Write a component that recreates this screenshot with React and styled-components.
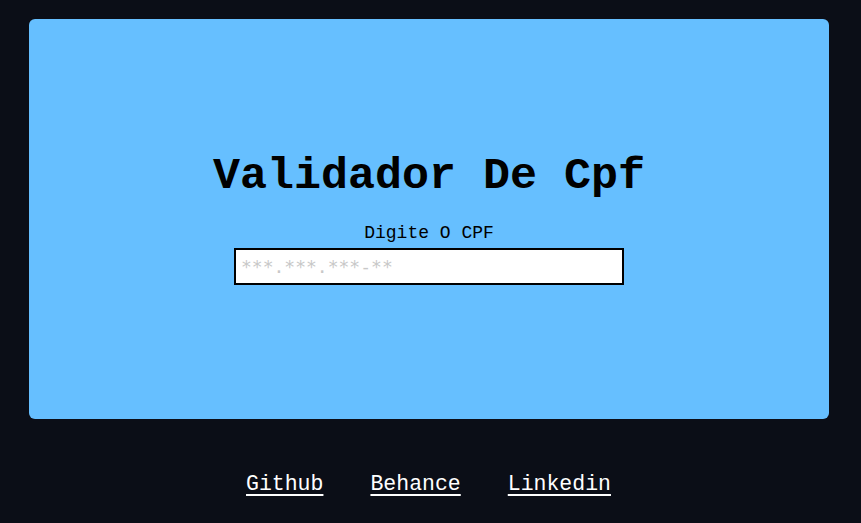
import React from "react";
import styled, { createGlobalStyle } from "styled-components";

const colors = {
  bg: "#0b0e17",
  card: "#66bfff",
  ink: "#000000",
  white: "#ffffff",
  hint: "#c8c8c8",
};

const GlobalStyle = createGlobalStyle`
  html, body {
    margin: 0;
    padding: 0;
    background: ${colors.bg};
    font-family: "Liberation Mono", "DejaVu Sans Mono", monospace;
  }
`;

const Page = styled.div`
  box-sizing: border-box;
  width: 861px;
  height: 523px;
  padding: 19px 32px 0 29px;
  display: flex;
  flex-direction: column;
`;

const Card = styled.main`
  width: 800px;
  height: 400px;
  background-color: ${colors.card};
  border-radius: 6px;
  display: flex;
  flex-direction: column;
  align-items: center;
  justify-content: center;
`;

const Title = styled.h1`
  margin: 0;
  font-size: 45px;
  font-weight: 700;
  line-height: 46px;
  color: ${colors.ink};
`;

const Label = styled.label`
  margin-top: 22px;
  font-size: 18px;
  line-height: 22px;
  color: ${colors.ink};
`;

const Input = styled.input`
  box-sizing: border-box;
  margin-top: 4px;
  width: 390px;
  height: 37px;
  border: 2px solid ${colors.ink};
  background: ${colors.white};
  padding: 0 5px;
  font-family: "DejaVu Sans Mono", monospace;
  font-size: 18px;
  outline: none;
  &::placeholder {
    color: ${colors.hint};
  }
`;

const Footer = styled.footer`
  display: flex;
  justify-content: center;
  gap: 47px;
  margin-top: 51px;
  margin-left: -1px;
`;

const Link = styled.a`
  color: ${colors.white};
  font-size: 21.5px;
  line-height: 28px;
  text-decoration: underline;
  text-decoration-thickness: 2px;
  text-underline-offset: 4px;
`;

export default function App() {
  return (
    <>
      <GlobalStyle />
      <Page>
        <Card>
          <Title>Validador De Cpf</Title>
          <Label htmlFor="cpf">Digite O CPF</Label>
          <Input id="cpf" placeholder="***.***.***-**" />
        </Card>
        <Footer>
          <Link href="#">Github</Link>
          <Link href="#">Behance</Link>
          <Link href="#">Linkedin</Link>
        </Footer>
      </Page>
    </>
  );
}
